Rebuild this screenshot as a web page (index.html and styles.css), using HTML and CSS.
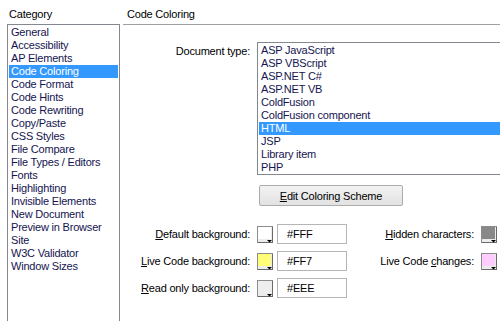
FILE: index.html
```html
<!DOCTYPE html>
<html>
<head>
<meta charset="utf-8">
<link rel="stylesheet" href="styles.css">
</head>
<body>
<div class="dialog">
  <div class="side">
    <div class="side-title">Category</div>
    <ul class="listbox cat-list">
      <li>General</li>
      <li>Accessibility</li>
      <li>AP Elements</li>
      <li class="sel">Code Coloring</li>
      <li>Code Format</li>
      <li>Code Hints</li>
      <li>Code Rewriting</li>
      <li>Copy/Paste</li>
      <li>CSS Styles</li>
      <li>File Compare</li>
      <li>File Types / Editors</li>
      <li>Fonts</li>
      <li>Highlighting</li>
      <li>Invisible Elements</li>
      <li>New Document</li>
      <li>Preview in Browser</li>
      <li>Site</li>
      <li>W3C Validator</li>
      <li>Window Sizes</li>
    </ul>
  </div>
  <div class="main">
    <div class="main-title">Code Coloring</div>
    <div class="form">
      <div class="doc-row">
        <div class="lbl doc-lbl">Document type:</div>
        <ul class="listbox doc-list">
          <li>ASP JavaScript</li>
          <li>ASP VBScript</li>
          <li>ASP.NET C#</li>
          <li>ASP.NET VB</li>
          <li>ColdFusion</li>
          <li>ColdFusion component</li>
          <li class="sel">HTML</li>
          <li>JSP</li>
          <li>Library item</li>
          <li>PHP</li>
        </ul>
      </div>
      <div class="btn-row">
        <button class="btn"><u>E</u>dit Coloring Scheme</button>
      </div>
      <div class="color-rows">
        <div class="color-row">
          <div class="lbl"><u>D</u>efault background:</div>
          <span class="swatch">
            <svg width="16" height="17" viewBox="0 0 16 17"><rect x="0.5" y="0.5" width="15" height="16" fill="#ececec" stroke="#8c8c8c"/><line x1="15.5" y1="1" x2="15.5" y2="17" stroke="#6a6a6a"/><line x1="1" y1="16.5" x2="16" y2="16.5" stroke="#6a6a6a"/><rect x="1" y="1" width="13" height="12" fill="#ffffff"/><path d="M10 14h5l-2.5 2.5z" fill="#000"/></svg>
          </span>
          <input class="hex" type="text" value="#FFF">
          <div class="right">
            <div class="lbl-r"><u>H</u>idden characters:</div>
            <span class="swatch">
              <svg width="16" height="17" viewBox="0 0 16 17"><rect x="0.5" y="0.5" width="15" height="16" fill="#ececec" stroke="#8c8c8c"/><line x1="15.5" y1="1" x2="15.5" y2="17" stroke="#6a6a6a"/><line x1="1" y1="16.5" x2="16" y2="16.5" stroke="#6a6a6a"/><rect x="1" y="1" width="13" height="12" fill="#888888"/><path d="M10 14h5l-2.5 2.5z" fill="#000"/></svg>
            </span>
          </div>
        </div>
        <div class="color-row">
          <div class="lbl"><u>L</u>ive Code background:</div>
          <span class="swatch">
            <svg width="16" height="17" viewBox="0 0 16 17"><rect x="0.5" y="0.5" width="15" height="16" fill="#ececec" stroke="#8c8c8c"/><line x1="15.5" y1="1" x2="15.5" y2="17" stroke="#6a6a6a"/><line x1="1" y1="16.5" x2="16" y2="16.5" stroke="#6a6a6a"/><rect x="1" y="1" width="13" height="12" fill="#ffff77"/><path d="M10 14h5l-2.5 2.5z" fill="#000"/></svg>
          </span>
          <input class="hex" type="text" value="#FF7">
          <div class="right">
            <div class="lbl-r">Live Code <u>c</u>hanges:</div>
            <span class="swatch">
              <svg width="16" height="17" viewBox="0 0 16 17"><rect x="0.5" y="0.5" width="15" height="16" fill="#ececec" stroke="#8c8c8c"/><line x1="15.5" y1="1" x2="15.5" y2="17" stroke="#6a6a6a"/><line x1="1" y1="16.5" x2="16" y2="16.5" stroke="#6a6a6a"/><rect x="1" y="1" width="13" height="12" fill="#ffccff"/><path d="M10 14h5l-2.5 2.5z" fill="#000"/></svg>
            </span>
          </div>
        </div>
        <div class="color-row">
          <div class="lbl"><u>R</u>ead only background:</div>
          <span class="swatch">
            <svg width="16" height="17" viewBox="0 0 16 17"><rect x="0.5" y="0.5" width="15" height="16" fill="#ececec" stroke="#8c8c8c"/><line x1="15.5" y1="1" x2="15.5" y2="17" stroke="#6a6a6a"/><line x1="1" y1="16.5" x2="16" y2="16.5" stroke="#6a6a6a"/><rect x="1" y="1" width="13" height="12" fill="#eeeeee"/><path d="M10 14h5l-2.5 2.5z" fill="#000"/></svg>
          </span>
          <input class="hex" type="text" value="#EEE">
        </div>
      </div>
    </div>
  </div>
</div>
</body>
</html>
```

FILE: styles.css
```css
html, body {
  margin: 0;
  padding: 0;
  width: 500px;
  height: 321px;
  overflow: hidden;
  background: #ffffff;
}
body {
  font-family: "Liberation Sans", Arial, sans-serif;
  font-size: 11px;
  line-height: 13px;
  letter-spacing: -0.2px;
  color: #000;
}
.dialog {
  display: flex;
  height: 321px;
}
.side {
  width: 116px;
  padding-left: 7px;
  flex: none;
}
.side-title {
  padding: 8px 0 3px 2px;
  height: 13px;
}
.listbox {
  list-style: none;
  margin: 0;
  padding: 1px;
  border: 1px solid #828790;
  background: #fff;
  color: #141450;
}
.listbox li {
  height: 13px;
  line-height: 13px;
  padding-left: 2px;
  white-space: nowrap;
}
.listbox li.sel {
  background: #3399ff;
  color: #fff;
}
.cat-list {
  width: 109px;
  height: 295px;
  border-bottom: none;
}
.main {
  flex: 1;
  overflow: hidden;
}
.main-title {
  padding: 8px 0 3px 4px;
  height: 13px;
  border-bottom: 1px solid #a0a0a0;
}
.form {
  display: flex;
  flex-direction: column;
  padding-top: 17px;
}
.doc-row {
  display: flex;
  align-items: flex-start;
}
.lbl {
  width: 127px;
  padding-right: 7px;
  text-align: right;
  flex: none;
  white-space: nowrap;
}
.doc-lbl {
  padding-top: 3px;
}
.doc-list {
  width: 260px;
  height: 129px;
  flex: none;
}
.btn-row {
  display: flex;
  padding-left: 136px;
  margin-top: 10px;
}
.btn {
  width: 144px;
  height: 21px;
  border: 1px solid #acacac;
  border-radius: 2px;
  background: linear-gradient(#f2f2f2, #e2e2e2);
  font-family: inherit;
  font-size: 11px;
  letter-spacing: -0.2px;
  color: #000;
  padding: 0;
}
.color-rows {
  display: flex;
  flex-direction: column;
  gap: 7px;
  margin-top: 18px;
}
.color-row {
  display: flex;
  align-items: center;
  height: 20px;
}
.swatch {
  display: flex;
  width: 16px;
  height: 17px;
  flex: none;
}
.hex {
  margin: 0 0 0 4px;
  width: 70px;
  height: 20px;
  box-sizing: border-box;
  border: 1px solid #b5b5b5;
  padding: 0 0 0 9px;
  font-family: inherit;
  font-size: 11px;
  letter-spacing: -0.2px;
  color: #000;
  background: #fff;
}
.right {
  margin-left: auto;
  display: flex;
  align-items: center;
  gap: 7px;
  padding-right: 3px;
}
.lbl-r {
  white-space: nowrap;
}
```
